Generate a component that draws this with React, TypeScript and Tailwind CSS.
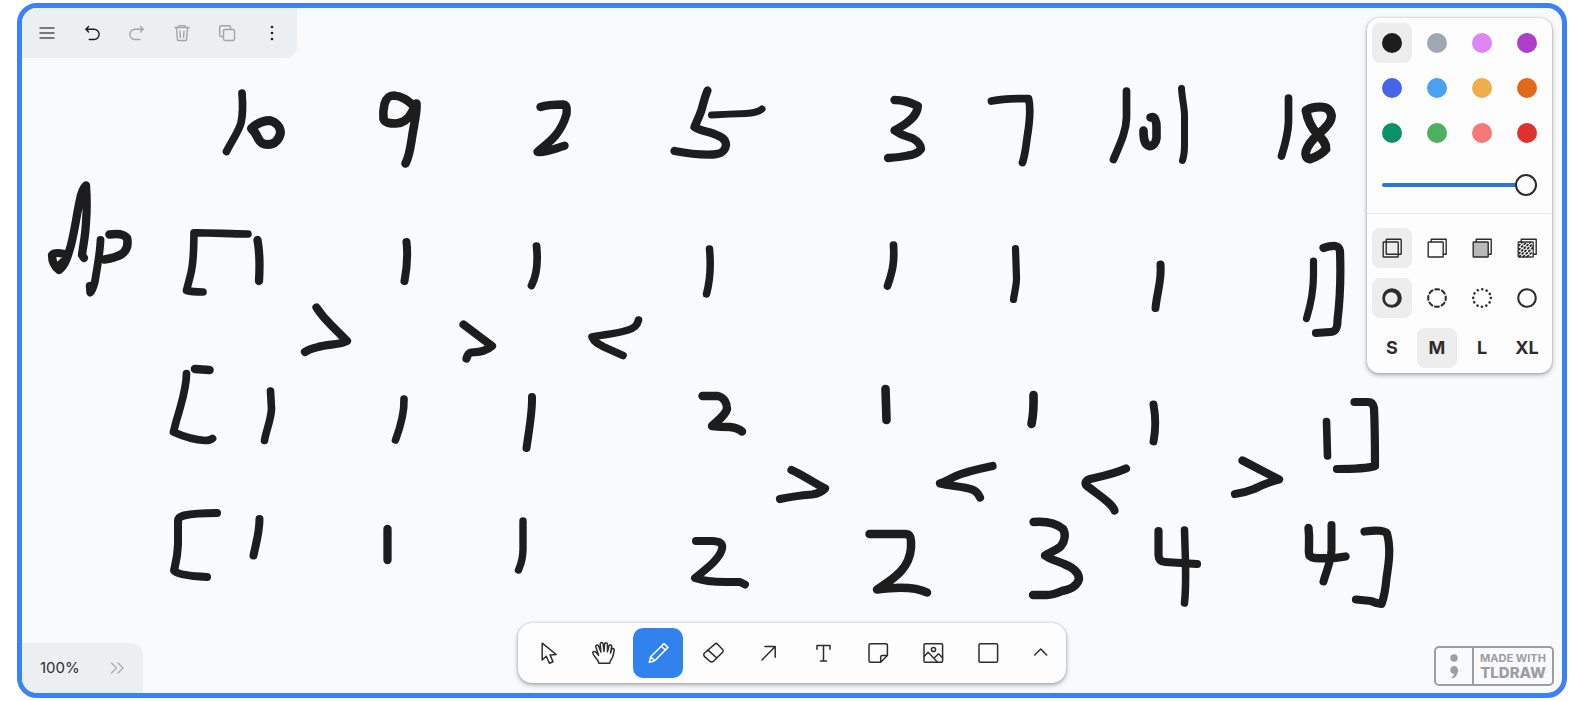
import type { ReactNode } from "react";

type Stroke = { d: string; w?: number };

/* Freehand strokes on the canvas, in page units. */
const strokes: Stroke[] = [
  // 10
  { d: "M242 93C243 105 243 114 241 123C238 133 231 142 226.5 151.5", w: 7.7 },
  { d: "M251.5 128.5C258 122 264 120.500 270 120.500C276 122 280.500 127 280.500 133C279 140 274 144.500 268 144.500C262 144.500 259.500 142 257.500 137C256 133 254 131 251.500 128.500", w: 9 },
  // 9
  { d: "M414 106C407 100 402 96 394 95.5C388 95.500 386 99 384.500 104C383 110 383 114 383.500 119C385 123 390 123.500 396 123.500C404 123 409 118 412 112C413 109 415 106 416.500 103.500C417 112 415 118 414 126C411 140 411 153 405.5 163.500", w: 8.6 },
  // 2
  { d: "M540.5 107C548 104.500 556 104.500 563 104.500C567 105 567 108 566.500 114C564 123 561 129 555 136C549 143 543 147 537.500 151.800C545 153 552 149.500 564.500 145.800", w: 8.4 },
  // 5
  { d: "M707.5 90.5C704 99 703 105 701.500 110C699 117 697 121 694.500 127C701 131 706 131 713 133.500C721 136.500 726 139 726 145C725 151 722 154 713 154.500C700 155 690 154 674.500 151", w: 8.3 },
  { d: "M711.5 115Q730 114 746 113.500Q757 113 762 109", w: 7 },
  // 3
  { d: "M894.5 100C903 100 910 102 918 106C917 116 909 123 894.5 130.500C902 136 907 136 913 138.500C919 142 921 145 921 149C918 153 914 155 908 155.500C901 157 895 157.500 888 158", w: 8.3 },
  // 7
  { d: "M991.5 101Q1005 98.500 1028.500 98.500C1031 108 1030 118 1028 132C1026 143 1026 152 1022.500 162.500", w: 7.7 },
  // 101
  { d: "M1126.500 91V118C1126 132 1120 144 1113.500 159.500", w: 7.7 },
  { d: "M1150.500 117.500C1155 116 1156.500 121 1156.500 127V138C1156 143 1153 146 1149.500 146.200C1145 145 1143.500 141 1143.500 130.500", w: 8.6 },
  { d: "M1181.500 88.500C1182 98 1184 105 1184.500 114V145C1184.500 151 1184 156 1182.500 160.500", w: 7 },
  // 18
  { d: "M1288.500 98V122C1288 134 1285 145 1281.500 156", w: 7.700 },
  { d: "M1306 110.500C1307.500 119 1311 128 1318 134.500C1323 140 1326.500 144 1326 149C1322 154 1316 157 1310 159C1306 158.500 1305 155 1306 151C1308 144 1313 139 1319 133.500C1327 127 1331.500 121 1331.500 116C1330.500 109 1326 107 1320 107C1314 107 1310 108 1306 110.500", w: 9 },
  // dp
  { d: "M64 254C58 252.500 54 252.500 52 255C52 263 55 267 59 270C65 266 68 256 71 245C75 229 77 213 79.500 202C81 193 83 188 86 185.500C87 200 87 210 86 222C85.500 236 83 246 82 255L84 258", w: 8.300 },
  { d: "M58 264L62 260", w: 4 },
  { d: "M100.500 240C100 254 97 268 95 281C93.500 287 92 291 90.200 292.500L89.700 286", w: 7.800 },
  { d: "M109.500 234.500C119 233 124 234 127 238C128.500 245 127 250 122 254C117 257 111 258.500 104.500 259.500", w: 8.600 },
  // first array
  { d: "M248 234C230 234 212 232.500 194 232.700C193.500 252 194 262 190.500 275L186.500 290.500Q192 292 203 292", w: 7.600 },
  { d: "M257.500 240Q260.500 256 259 281", w: 8.300 },
  { d: "M406.500 242Q408.500 260 404.500 281", w: 8 },
  { d: "M536.500 246C538 260 537.500 274 531.500 285.500", w: 7.700 },
  { d: "M709.500 249C711 265 710.500 279 706.500 294", w: 7.500 },
  { d: "M893.500 245C894.500 262 893 270 887.500 286", w: 7.700 },
  { d: "M1015.500 248.500L1016.500 278C1016.500 286 1014.500 292 1013.500 299.500", w: 7.200 },
  { d: "M1160.500 264.500C1162 280 1157 292 1155.500 308", w: 8 },
  { d: "M1313.500 261V275C1313.500 294 1310 307 1306.500 318.500", w: 7.200 },
  { d: "M1323.500 248C1334 244.500 1339 245 1340 251C1341 278 1340 300 1337.500 320C1337.500 328 1336 332 1330 332L1316 333", w: 8.200 },
  // comparisons
  { d: "M316.500 307.500C322 316 327 321 331 325L347 341C340 345 328 344 318 347C312 348.500 308 350 305 352", w: 8.200 },
  { d: "M463.500 324.500L492 346C487 350.500 480 352.500 471 352.500Q468 353 466.500 358.500", w: 8.200 },
  { d: "M638.500 320C637 326 634 328 628 330C616 334 604 334.500 592 337C594 342 598 344 604 347L623 355.500", w: 7.600 },
  // second array
  { d: "M195 369L209.500 370", w: 8.600 },
  { d: "M186.500 373.500C186.500 387 182 401 179 412C176 421 175 426 173.500 432Q190 439.500 205 440.500Q210 440.500 212.500 438.500", w: 7.700 },
  { d: "M270.500 391L271.500 409C271 420 266 431 264.500 440.500", w: 7.600 },
  { d: "M404 399C404.500 414 400 428 395.500 440", w: 7.600 },
  { d: "M532 397C532.500 412 529 430 526.500 448", w: 8 },
  { d: "M702.500 396H718C724 397.500 727 403 727 409C725 416 717 421 712 426Q720 427 730 427Q738 428 742 431.500", w: 8.400 },
  { d: "M885.500 389L886.500 420", w: 8.600 },
  { d: "M1033.500 395Q1034 412 1031.500 424", w: 8.600 },
  { d: "M1153.500 404.500Q1157 424 1153.500 441.500", w: 7.900 },
  { d: "M1326.500 421.500L1327.500 456", w: 7.600 },
  { d: "M1354.500 402H1368Q1373 402 1374 408Q1375 430 1375 466Q1365 469 1337 469", w: 8.200 },
  // comparisons
  { d: "M791.500 470C803 475 812 482 825 488.500Q820 493.500 812 494.500Q794 496 780 499", w: 8.200 },
  { d: "M992.500 466C976 469.500 966 471.500 956 476C949 479 945 482 940 483.500C950 486 964 486.500 972 489.500Q977 491 980 497.500", w: 8.200 },
  { d: "M1126 468.500C1114 474 1103 476 1090 479Q1084 481 1086 485C1098 495 1112 503 1114.500 510.500", w: 8.200 },
  { d: "M1242.500 460.500L1279 479.500C1268 482 1260 486 1254 489Q1244 493 1235 494", w: 8.200 },
  // third array
  { d: "M217 513Q195 513 184 515.500Q178 517 178 521V545C177.500 557 176 562 174 570.500Q178 575.500 207 577", w: 8 },
  { d: "M259.500 519C259.500 533 256 543 253.500 555.500", w: 8 },
  { d: "M387.500 529V560", w: 8.300 },
  { d: "M523 521V549C523 560 521 564 518.500 570", w: 7.400 },
  { d: "M696 541H713C721 541.500 723 544 722 549C719 560 706 569 695 578Q706 582 726 582H740L745 584.500", w: 8 },
  { d: "M869.500 534H905Q911 534 911 541V548C909.500 567 897 577 877 589.500Q912 585 927 592.500", w: 8.500 },
  { d: "M1033.500 522C1046 521 1057 524 1063 529C1066 534 1065 541 1061 546C1057 550 1050 552.500 1045 555.500C1051 560 1058 561 1064 564C1074 568 1079 573 1079 579C1077 587 1070 589.500 1062 591Q1053 595 1047 595H1033", w: 8.400 },
  { d: "M1158.500 531V555Q1159 562 1165 562L1197 564", w: 8.200 },
  { d: "M1184.500 530Q1185 545 1185.500 563Q1186 590 1184.500 603", w: 7.500 },
  { d: "M1308.500 528C1310 540 1308.500 547 1309 553Q1309 557.500 1315 558Q1333 559 1345.500 556.500", w: 8.400 },
  { d: "M1331.500 525V550C1331 562 1326 572 1323.500 581.500", w: 8 },
  { d: "M1364.500 531.500Q1384 529 1387 533.500C1391 548 1389 562 1386.500 578Q1385 595 1381.500 604Q1375 603 1371 601L1356 599.500", w: 8.200 },
];

function Icon({ children, sw = 1.5, dim = false }: { children: ReactNode; sw?: number; dim?: boolean }) {
  return (
    <svg
      viewBox="0 0 24 24"
      className={dim ? "size-6 shrink-0 opacity-35" : "size-6 shrink-0"}
      fill="none"
      stroke="currentColor"
      strokeWidth={sw}
      strokeLinecap="round"
      strokeLinejoin="round"
      aria-hidden="true"
    >
      {children}
    </svg>
  );
}

const actions: { name: string; off?: boolean; icon: ReactNode }[] = [
  { name: "Menu", icon: <path d="M5 7h14M5 12h14M5 17h14" opacity=".75" /> },
  { name: "Undo", icon: <path d="M8.600 5.400L5.800 8.200l2.800 2.800M6 8.200h8a5.100 5.100 0 0 1 0 10.300H9.200" /> },
  { name: "Redo", off: true, icon: <path d="M15.400 5.400l2.800 2.800-2.800 2.800M18 8.200h-8a5.100 5.100 0 0 0 0 10.300h4.800" /> },
  {
    name: "Delete",
    off: true,
    icon: <path d="M5 6.500h14M8.600 6.300V5.600a1 1 0 0 1 1-1h4.800a1 1 0 0 1 1 1v.7M6.400 6.500l1 12.100a1 1 0 0 0 1 .9h7.200a1 1 0 0 0 1-.9l1-12.100M10 10.200l.4 6.400M14 10.200l-.4 6.400" />,
  },
  {
    name: "Duplicate",
    off: true,
    icon: (
      <>
        <rect x="8.500" y="8.500" width="11" height="11" rx="1.400" />
        <path d="M8.200 15.500H6a1.300 1.300 0 0 1-1.300-1.300V6A1.300 1.300 0 0 1 6 4.700h8.200A1.300 1.300 0 0 1 15.500 6v2.200" />
      </>
    ),
  },
  {
    name: "More actions",
    icon: (
      <g fill="currentColor" stroke="none">
        <circle cx="12" cy="6" r="1.300" />
        <circle cx="12" cy="12" r="1.300" />
        <circle cx="12" cy="18" r="1.300" />
      </g>
    ),
  },
];

const tools: { name: string; icon: ReactNode }[] = [
  { name: "Select", icon: <path d="M6.200 2.200V19L10.300 15.200L13.400 22.300L17 20.700L14 13.900L20.200 13.500Z" /> },
  {
    name: "Hand",
    icon: (
      <path d="M7.800 22.300C7.800 18.500 2 15 1.700 11.800C1.700 10.200 3.900 9.900 5 11.300L7.600 14.200L4.900 6.300C4.200 4.200 6.800 3.200 7.700 5.200L9.900 11L9.200 3.300C9.100 1.200 11.700 1 12.100 3L13 10.400L13.600 3.100C13.800 1.200 16.500 1.400 16.500 3.300L16.400 10.800L18 4.900C18.600 3.200 21 3.700 20.700 5.600L19.500 12L20.500 8.600C21.100 6.900 23.500 7.400 23.200 9.300C22.600 12.800 22.100 14.700 21.300 16.700C20.300 19 18.800 19.500 18.800 22.300Z" />
    ),
  },
  {
    name: "Draw",
    icon: <path d="M3.200 21.200L4.700 15.700L18 2.600L21.900 6.400L8.700 19.700ZM15.400 5.200L19.300 9M4.700 15.700L8.700 19.700" />,
  },
  {
    name: "Eraser",
    icon: <path d="M14.200 2.900a1.500 1.500 0 0 1 2.100 0l5.500 5.900a1.500 1.500 0 0 1 0 2.100L12.700 20a3 3 0 0 1-4.100 0L3.600 15.600a2.500 2.500 0 0 1-.1-3.600ZM6.800 8.900L15.800 17" />,
  },
  { name: "Arrow", icon: <path d="M6 19L19.200 5.500M8.900 5.500H19.200V16.200" /> },
  { name: "Text", icon: <path d="M6 8.200V4.500H19V8.200M12.500 4.500V20M9.500 20h6" /> },
  {
    name: "Note",
    icon: <path d="M4.500 2.700H19.900A1.500 1.500 0 0 1 21.400 4.200V14.500L14.700 21.300H4.500A1.500 1.500 0 0 1 3 19.800V4.200A1.500 1.500 0 0 1 4.500 2.700ZM14.700 21.300V16a1.500 1.500 0 0 1 1.500-1.500H21.400" />,
  },
  {
    name: "Image",
    icon: (
      <>
        <rect x="3" y="2.700" width="18.600" height="18.600" rx="1.300" />
        <circle cx="12.500" cy="8.500" r="2.100" />
        <path d="M3 15.500L7.200 11.300L16.500 21.300M12.900 17.200L17.500 12.800L21.600 16.800" />
      </>
    ),
  },
  { name: "Rectangle", icon: <rect x="3" y="2.700" width="18.600" height="18.600" rx="1.300" /> },
];

const colors: [string, string][] = [
  ["Black", "bg-[#1d1d1d]"],
  ["Grey", "bg-[#9fa8b2]"],
  ["Light violet", "bg-[#e085f4]"],
  ["Violet", "bg-[#ae3ec9]"],
  ["Blue", "bg-[#4465e9]"],
  ["Light blue", "bg-[#4ba1f1]"],
  ["Yellow", "bg-[#f1ac4b]"],
  ["Orange", "bg-[#e16919]"],
  ["Green", "bg-[#099268]"],
  ["Light green", "bg-[#4cb05e]"],
  ["Light red", "bg-[#f87777]"],
  ["Red", "bg-[#e03131]"],
];

const backSheet = <path d="M6.200 5.800V3.300H21.200V18.300H18.300" />;

const fills: { name: string; icon: ReactNode }[] = [
  {
    name: "No fill",
    icon: (
      <>
        <rect x="3.200" y="6" width="15" height="15" rx=".6" />
        <rect x="6.200" y="3.300" width="15" height="15" rx=".6" />
      </>
    ),
  },
  { name: "Semi fill", icon: <>{backSheet}<rect x="3.200" y="6" width="15" height="15" rx=".6" /></> },
  { name: "Solid fill", icon: <>{backSheet}<rect x="3.200" y="6" width="15" height="15" rx=".6" fill="#b9b9b9" /></> },
  {
    name: "Pattern fill",
    icon: (
      <>
        {backSheet}
        <rect x="3.200" y="6" width="15" height="15" rx=".6" strokeDasharray="2.200 1.200" />
        <path
          d="M4 9.500L7 6.500M4 13.500L11 6.500M4 17.500L15 6.500M4.500 20.500L17.500 8M8.500 20.500L17.500 11.800M12.500 20.500L17.500 15.800"
          strokeDasharray="1.200 2.600"
          strokeWidth="1.900"
        />
      </>
    ),
  },
];

const dashes: { name: string; icon: ReactNode }[] = [
  {
    name: "Draw",
    icon: <path fill="currentColor" stroke="none" fillRule="evenodd" d="M12 2.200a9.800 9.800 0 1 0 0 19.600a9.800 9.800 0 1 0 0-19.600ZM11.300 6.200a6.300 6.300 0 1 1 0 12.600a6.300 6.300 0 1 1 0-12.600Z" />,
  },
  { name: "Dashed", icon: <circle cx="12" cy="12" r="8.800" strokeWidth="2.100" strokeDasharray="3.900 3.010" strokeDashoffset="1.950" /> },
  { name: "Dotted", icon: <circle cx="12" cy="12" r="8.800" strokeWidth="2.600" strokeDasharray="0.010 4.598" /> },
  { name: "Solid", icon: <circle cx="12" cy="12" r="8.800" strokeWidth="2.100" /> },
];

const cell = "flex size-10 items-center justify-center rounded-lg";
const cellOn = "flex size-10 items-center justify-center rounded-lg bg-[#ededed]";
const raised = "bg-[#fdfdfd] shadow-[0_0_2px_rgba(0,0,0,0.22),0_2px_4px_rgba(0,0,0,0.28),0_2px_8px_rgba(0,0,0,0.06)]";

function StylePanel() {
  return (
    <aside className={`mt-2.5 mr-2.5 rounded-xl ${raised}`} aria-label="Styles">
      <div className="grid grid-cols-4 gap-[5px] px-[5px] pt-[5px]">
        {colors.map(([name, bg], i) => (
          <button key={name} type="button" aria-label={name} className={i === 0 ? cellOn : cell}>
            <span className={`size-5 rounded-full ${bg}`} />
          </button>
        ))}
      </div>
      <div className="flex h-[61px] items-center border-b border-[#e8e8e8] px-[15px] pt-1">
        <input
          type="range"
          aria-label="Opacity"
          min={0}
          max={100}
          defaultValue={100}
          className="h-6 w-full appearance-none bg-transparent [&::-webkit-slider-runnable-track]:h-1 [&::-webkit-slider-runnable-track]:rounded-full [&::-webkit-slider-runnable-track]:bg-[#2a75d5] [&::-webkit-slider-thumb]:-mt-[9px] [&::-webkit-slider-thumb]:size-[22px] [&::-webkit-slider-thumb]:appearance-none [&::-webkit-slider-thumb]:rounded-full [&::-webkit-slider-thumb]:border-2 [&::-webkit-slider-thumb]:border-[#2d2d2d] [&::-webkit-slider-thumb]:bg-[#fdfdfd]"
        />
      </div>
      <div className="grid grid-cols-4 gap-x-[5px] gap-y-2.5 px-[5px] pt-[14px] pb-[5px] text-[#2d2d2d]">
        {fills.map((f, i) => (
          <button key={f.name} type="button" aria-label={f.name} className={i === 0 ? cellOn : cell}>
            <Icon sw={1.4}>{f.icon}</Icon>
          </button>
        ))}
        {dashes.map((f, i) => (
          <button key={f.name} type="button" aria-label={f.name} className={i === 0 ? cellOn : cell}>
            <Icon>{f.icon}</Icon>
          </button>
        ))}
        {["S", "M", "L", "XL"].map((s) => (
          <button key={s} type="button" className={`${s === "M" ? cellOn : cell} text-lg font-bold`}>
            {s}
          </button>
        ))}
      </div>
    </aside>
  );
}

export default function App() {
  return (
    <div className="flex h-screen bg-white pt-[3px] pr-2 pb-[3px] pl-[17px] font-['Inter',sans-serif] text-[#1d1d1d]">
      <main className="relative flex flex-1 flex-col justify-between overflow-hidden rounded-[20px] border-[5px] border-[#3b82f6] bg-[#f9fafc]">
        <svg className="absolute inset-0 h-full w-full" role="img" aria-label="Whiteboard drawing">
          <g transform="translate(-22 -8)" fill="none" stroke="#1d1d1d" strokeLinecap="round" strokeLinejoin="round">
            {strokes.map((s, i) => (
              <path key={i} d={s.d} strokeWidth={s.w ?? 8} />
            ))}
          </g>
        </svg>

        <header className="relative flex items-start justify-between">
          <nav className="flex gap-[5px] rounded-br-xl bg-[#ebeff2] p-[5px]" aria-label="Actions">
            {actions.map((a) => (
              <button key={a.name} type="button" aria-label={a.name} disabled={a.off} className={cell}>
                <Icon sw={1.4} dim={a.off}>{a.icon}</Icon>
              </button>
            ))}
          </nav>
          <StylePanel />
        </header>

        <footer className="relative grid grid-cols-[1fr_auto_1fr] items-end">
          <nav className="flex h-[50px] items-center justify-self-start rounded-tr-xl bg-[#ebeff2] pr-[6px] pl-[18px]" aria-label="Zoom">
            <button type="button" className="w-[57px] text-left text-[15px] text-[#2d2d2d]">100%</button>
            <button type="button" aria-label="Show minimap" className={cell}>
              <svg viewBox="0 0 24 24" className="size-6 opacity-30" fill="none" stroke="currentColor" strokeWidth="1.400" strokeLinecap="round" strokeLinejoin="round" aria-hidden="true">
                <path d="M6.500 7L11.500 12L6.500 17M13 7L18 12L13 17" />
              </svg>
            </button>
          </nav>

          <nav className={`mb-2.5 flex gap-[5px] rounded-[14px] p-[5px] text-[#2d2d2d] ${raised}`} aria-label="Tools">
            {tools.map((t) => (
              <button
                key={t.name}
                type="button"
                aria-label={t.name}
                className={
                  t.name === "Draw"
                    ? "flex size-[50px] items-center justify-center rounded-[10px] bg-[#3182ed] text-white"
                    : "flex size-[50px] items-center justify-center rounded-[10px]"
                }
              >
                <Icon>{t.icon}</Icon>
              </button>
            ))}
            <button type="button" aria-label="More tools" className="flex w-[43px] items-center justify-center">
              <Icon><path d="M6.700 14L12.700 8L18.700 14" /></Icon>
            </button>
          </nav>

          <a
            href="#tldraw"
            className="mr-2 mb-[7px] flex h-10 w-[120px] justify-self-end rounded-[5px] border-2 border-[#9c9ea1] text-[#9c9ea1]"
          >
            <span className="flex w-[38px] items-center justify-center border-r-2 border-[#9c9ea1]">
              <svg viewBox="0 0 12 26" className="h-[26px] w-3" fill="currentColor" aria-hidden="true">
                <circle cx="6" cy="5" r="3.700" />
                <path d="M6 13C8.600 13 10 15 10 17.500C10 21 7.800 24.500 4.700 25.200C3.500 25.400 3.200 24.500 4.200 23.900C5.400 23 6 22 6 20.800C3.800 20.800 2.200 19.200 2.200 17C2.200 14.700 3.800 13 6 13Z" />
              </svg>
            </span>
            <span className="flex flex-1 flex-col items-center justify-center gap-px">
              <span className="text-[11px] leading-3 font-bold">MADE WITH</span>
              <span className="text-[15px] leading-4 font-extrabold">TLDRAW</span>
            </span>
          </a>
        </footer>
      </main>
    </div>
  );
}
